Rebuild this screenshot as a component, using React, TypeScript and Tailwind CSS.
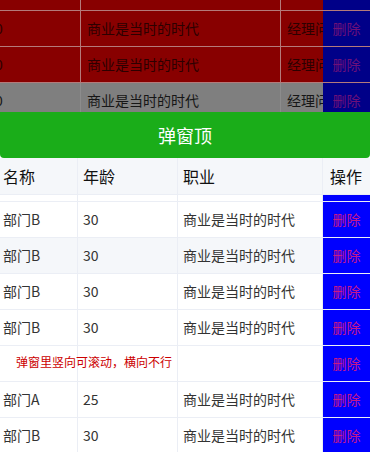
const font = { fontFamily: '"Noto Sans CJK SC", "Noto Sans", sans-serif' };

type Row = { name: string; age: string; job: string; note?: boolean; striped?: boolean };

const rows: Row[] = [
  { name: '部门B', age: '30', job: '商业是当时的时代' },
  { name: '部门B', age: '30', job: '商业是当时的时代' },
  { name: '部门B', age: '30', job: '商业是当时的时代', striped: true },
  { name: '部门B', age: '30', job: '商业是当时的时代' },
  { name: '部门B', age: '30', job: '商业是当时的时代' },
  { name: '', age: '', job: '', note: true },
  { name: '部门A', age: '25', job: '商业是当时的时代' },
  { name: '部门B', age: '30', job: '商业是当时的时代' },
];

function BgRow({ gray }: { gray?: boolean }) {
  const bg = gray ? 'bg-[#7f7f7f]' : 'bg-[#880000]';
  const line = gray ? 'border-[#8c8c8c]' : 'border-[#b47a7a]';
  const text = gray ? 'text-[#161616]' : 'text-[#2c0000]';
  return (
    <div className={`flex h-[36px] shrink-0 border-b ${line} ${bg} text-[14px] ${text}`}>
      <div className={`flex w-[81px] shrink-0 items-center overflow-hidden border-r ${line}`}>
        <span className="ml-[-5px]">0</span>
      </div>
      <div className={`flex w-[200px] shrink-0 items-center border-r ${line} pl-[6px]`}>商业是当时的时代</div>
      <div className="flex w-[42px] shrink-0 items-center overflow-hidden whitespace-nowrap pl-[6px]">经理问题</div>
      <div className="flex flex-1 items-center justify-center bg-[#000088] text-[#6e1078]">删除</div>
    </div>
  );
}

function DeleteCell() {
  return (
    <div className="flex flex-1 items-center justify-center bg-[#0000ff] text-[14px] text-[#c81888]">删除</div>
  );
}

export default function App() {
  return (
    <div className="flex h-[452px] w-[370px] flex-col overflow-hidden bg-white" style={font}>
      {/* page behind the dialog, dimmed */}
      <div className="flex h-[112px] shrink-0 flex-col overflow-hidden">
        <div className="mt-[-25px] flex flex-col">
          <BgRow />
          <BgRow />
          <BgRow />
          <BgRow gray />
        </div>
      </div>

      {/* dialog */}
      <div className="flex flex-1 flex-col">
        <div className="flex h-[46px] shrink-0 items-center justify-center rounded-b-[4px] bg-[#1aad19] text-[18px] text-white">
          弹窗顶
        </div>

        <div className="flex h-[37px] shrink-0 border-b border-[#ebeef5] bg-[#f5f7fa] text-[16px] text-[#111]">
          <div className="flex w-[78px] shrink-0 items-center border-r border-[#ebeef5] pl-[3px]">名称</div>
          <div className="flex w-[100px] shrink-0 items-center border-r border-[#ebeef5] pl-[5px]">年龄</div>
          <div className="flex w-[145px] shrink-0 items-center border-r border-[#ebeef5] pl-[5px]">职业</div>
          <div className="flex flex-1 items-center pl-[7px]">操作</div>
        </div>

        <div className="flex flex-1 flex-col overflow-hidden border-b border-[#d4d7de]">
          <div className="mt-[-29px] flex flex-col">
            {rows.map((r, i) => (
              <div
                key={i}
                className={`flex h-[36px] shrink-0 border-b border-[#ebeef5] text-[14px] text-[#333] ${r.striped ? 'bg-[#f5f7fa]' : 'bg-white'}`}
              >
                <div className="relative flex w-[78px] shrink-0 items-center border-r border-[#ebeef5] pl-[3px]">
                  {r.note ? (
                    <span className="mb-[4px] ml-[13px] whitespace-nowrap text-[12px] text-[#cc0000]">
                      弹窗里竖向可滚动，横向不行
                    </span>
                  ) : (
                    r.name
                  )}
                </div>
                <div className="flex w-[100px] shrink-0 items-center border-r border-[#ebeef5] pl-[5px]">{r.age}</div>
                <div className="flex w-[145px] shrink-0 items-center border-r border-[#ebeef5] pl-[5px]">{r.job}</div>
                <DeleteCell />
              </div>
            ))}
          </div>
        </div>
      </div>
    </div>
  );
}
